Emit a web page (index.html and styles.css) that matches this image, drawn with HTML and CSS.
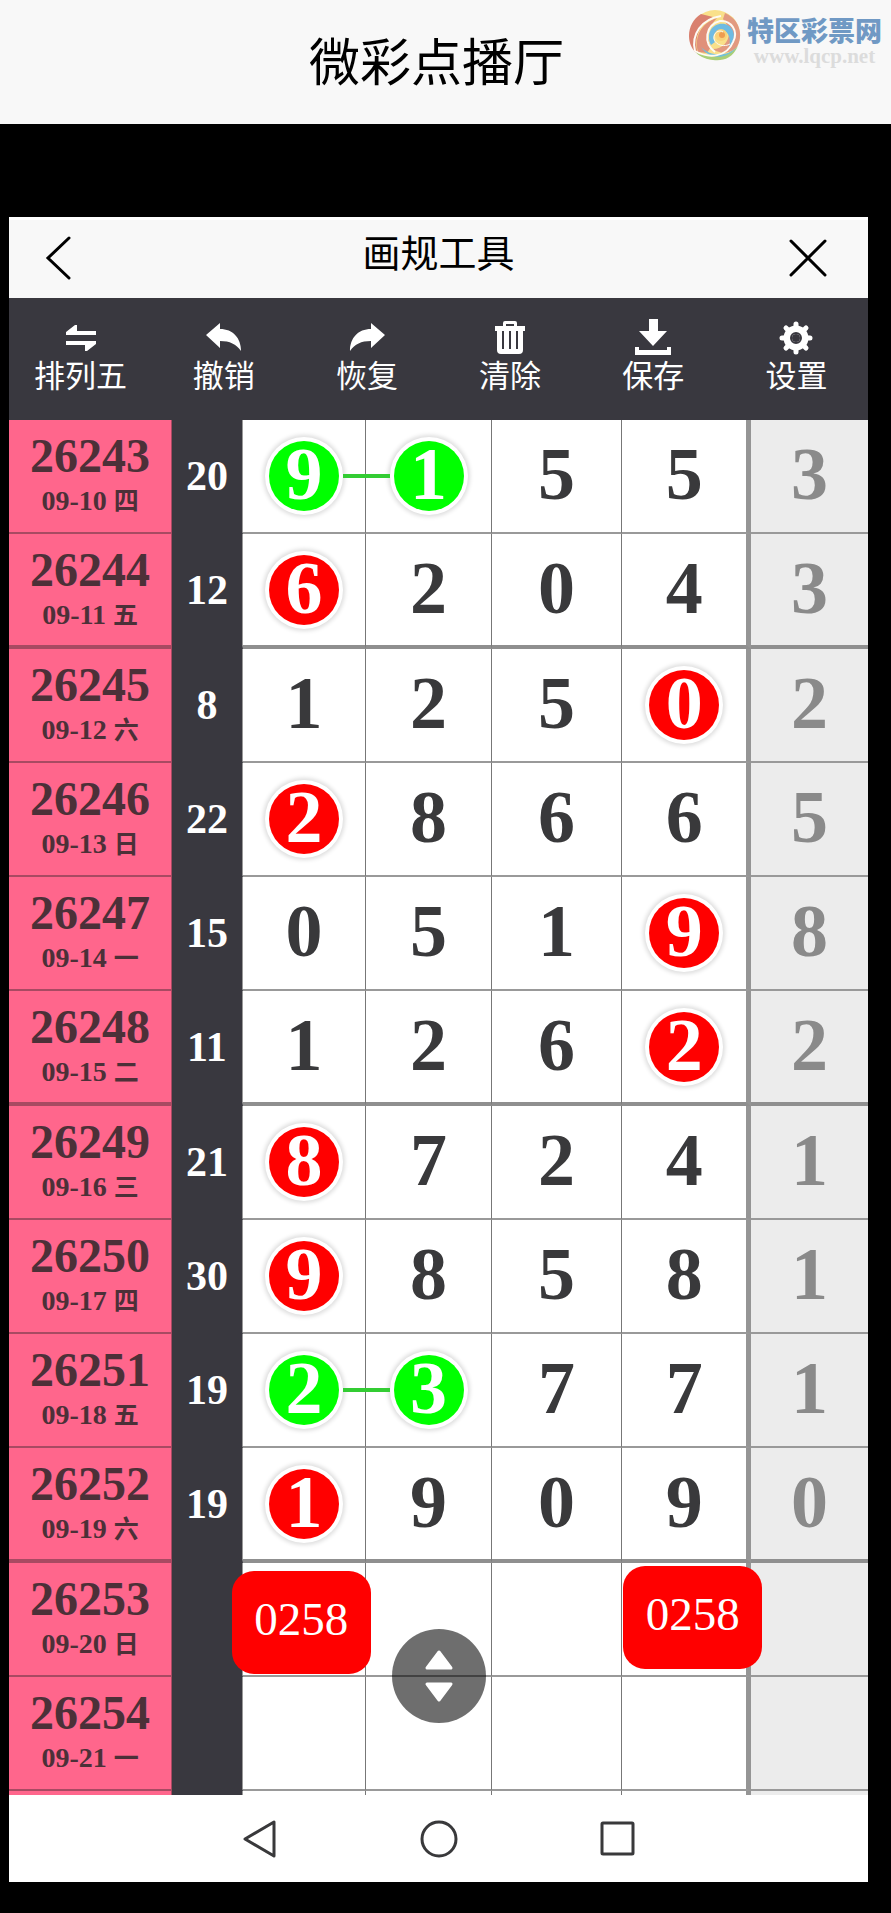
FILE: index.html
```
<!DOCTYPE html>
<html lang="zh-CN">
<head>
    <meta charset="UTF-8">
    <meta name="viewport" content="width=device-width, initial-scale=1">
    <title>微彩点播厅</title>
    <link rel="stylesheet" href="styles.css">
</head>
<body>
<header class="top">
    <h1>微彩点播厅</h1>
    <a href="#" class="logo">
        <svg class="logo_ico" viewBox="0 0 52 52" aria-hidden="true">
            <circle cx="26" cy="26" r="25" fill="#f9e08a"/>
            <path d="M12 5C-4 15-3 38 9 45C4 30 10 15 24 8Z" fill="#d9806f"/>
            <path d="M9 43C5 28 12 14 28 9C19 18 16 28 22 38L18 44Z" fill="#e0907a"/>
            <path d="M36 4C50 10 55 25 48 38C43 44 32 46 24 40C38 40 46 24 34 10Z" fill="#e29a80"/>
            <path d="M6 42C18 50 38 50 49 37C43 50 34 52 24 51C16 50 9 47 6 42Z" fill="#a9cf78"/>
            <path d="M12 38C22 48 38 48 48 38C40 49 22 53 12 38Z" fill="#72c0dc"/>
            <path d="M22 36C16 24 24 13 36 15C46 18 48 30 40 38C43 28 38 20 31 21C25 22 23 28 26 33Z" fill="#6fbbe2"/>
            <circle cx="32" cy="26" r="6" fill="#f8d27a"/>
            <circle cx="33" cy="26" r="3" fill="#ee9c50"/>
            <path d="M6 42C2 26 12 10 32 7M26 43C14 34 16 16 31 12C42 11 50 22 44 33M6 42C20 50 38 48 44 33" fill="none" stroke="#fdfaf4" stroke-width="2"/>
            <path d="M41 35C36 38 27 37 25 30C24 24 30 20 34 23" fill="none" stroke="#fdfaf4" stroke-width="1"/>
        </svg>
        <span class="logo_txt">
            <b>特区彩票网</b>
            <i>www.lqcp.net</i>
        </span>
    </a>
</header>
<main class="phone">
    <div class="bar">
        <button class="back" aria-label="返回">
            <svg viewBox="0 0 44 44"><path d="M33 2L12 22L33 42"/></svg>
        </button>
        <h2>画规工具</h2>
        <button class="close" aria-label="关闭">
            <svg viewBox="0 0 44 44"><path d="M5 5L39 39M39 5L5 39"/></svg>
        </button>
    </div>
    <div class="tools">
        <button>
            <svg viewBox="0 0 36 36"><path d="M3 16V13L12 6H14V12H33V16ZM33 22V25L24 32H22V26H3V22Z"/></svg>
            排列五
        </button>
        <button>
            <svg viewBox="0 0 36 36"><path d="M0 16L14 4V10C27 10 35 19 35 32C30 25 24 22 14 22V29Z"/></svg>
            撤销
        </button>
        <button>
            <svg viewBox="0 0 36 36"><path d="M36 16L22 4V10C9 10 1 19 1 32C6 25 12 22 22 22V29Z"/></svg>
            恢复
        </button>
        <button>
            <svg viewBox="0 0 36 36"><path fill-rule="evenodd" d="M11 7V4Q11 2 13 2H23Q25 2 25 4V7H33V12H31V31Q31 35 27 35H9Q5 35 5 31V12H3V7ZM14 5V7H22V5ZM10 12V30H12V12ZM17 12V30H19V12ZM24 12V30H26V12Z"/></svg>
            清除
        </button>
        <button>
            <svg viewBox="0 0 36 36"><path d="M14 0H23V12H32L18 27L4 12H14ZM0 28H4V31H32V28H36V36H0Z"/></svg>
            保存
        </button>
        <button>
            <svg viewBox="0 0 36 36">
                <circle cx="18" cy="19" r="9" fill="none" stroke="#fff" stroke-width="7"/>
                <circle cx="18" cy="19" r="3" fill="none" stroke="#fff" stroke-width="1"/>
                <path d="M18 5V33M4 19H32M8 9L28 29M28 9L8 29" fill="none" stroke="#fff" stroke-width="5" stroke-linecap="round"/>
                <circle cx="18" cy="19" r="5" fill="#fff" stroke="#39383f" stroke-width="2"/>
                <circle cx="18" cy="19" r="4" fill="#39383f"/>
            </svg>
            设置
        </button>
    </div>
    <div class="chart">
        <table>
            <colgroup>
                <col class="c_qi"><col class="c_sum"><col class="c_1"><col class="c_2"><col class="c_3"><col class="c_4"><col class="c_5">
            </colgroup>
            <tbody>
            <tr>
                <th scope="row">26243<small>09-10 <em>四</em></small></th>
                <td class="sum">20</td>
                <td><span class="num green link">9</span></td>
                <td><span class="num green">1</span></td>
                <td><span class="num">5</span></td>
                <td><span class="num">5</span></td>
                <td><span class="num">3</span></td>
            </tr>
            <tr class="thick">
                <th scope="row">26244<small>09-11 <em>五</em></small></th>
                <td class="sum">12</td>
                <td><span class="num red">6</span></td>
                <td><span class="num">2</span></td>
                <td><span class="num">0</span></td>
                <td><span class="num">4</span></td>
                <td><span class="num">3</span></td>
            </tr>
            <tr>
                <th scope="row">26245<small>09-12 <em>六</em></small></th>
                <td class="sum">8</td>
                <td><span class="num">1</span></td>
                <td><span class="num">2</span></td>
                <td><span class="num">5</span></td>
                <td><span class="num red">0</span></td>
                <td><span class="num">2</span></td>
            </tr>
            <tr>
                <th scope="row">26246<small>09-13 <em>日</em></small></th>
                <td class="sum">22</td>
                <td><span class="num red">2</span></td>
                <td><span class="num">8</span></td>
                <td><span class="num">6</span></td>
                <td><span class="num">6</span></td>
                <td><span class="num">5</span></td>
            </tr>
            <tr>
                <th scope="row">26247<small>09-14 <em>一</em></small></th>
                <td class="sum">15</td>
                <td><span class="num">0</span></td>
                <td><span class="num">5</span></td>
                <td><span class="num">1</span></td>
                <td><span class="num red">9</span></td>
                <td><span class="num">8</span></td>
            </tr>
            <tr class="thick">
                <th scope="row">26248<small>09-15 <em>二</em></small></th>
                <td class="sum">11</td>
                <td><span class="num">1</span></td>
                <td><span class="num">2</span></td>
                <td><span class="num">6</span></td>
                <td><span class="num red">2</span></td>
                <td><span class="num">2</span></td>
            </tr>
            <tr>
                <th scope="row">26249<small>09-16 <em>三</em></small></th>
                <td class="sum">21</td>
                <td><span class="num red">8</span></td>
                <td><span class="num">7</span></td>
                <td><span class="num">2</span></td>
                <td><span class="num">4</span></td>
                <td><span class="num">1</span></td>
            </tr>
            <tr>
                <th scope="row">26250<small>09-17 <em>四</em></small></th>
                <td class="sum">30</td>
                <td><span class="num red">9</span></td>
                <td><span class="num">8</span></td>
                <td><span class="num">5</span></td>
                <td><span class="num">8</span></td>
                <td><span class="num">1</span></td>
            </tr>
            <tr>
                <th scope="row">26251<small>09-18 <em>五</em></small></th>
                <td class="sum">19</td>
                <td><span class="num green link">2</span></td>
                <td><span class="num green">3</span></td>
                <td><span class="num">7</span></td>
                <td><span class="num">7</span></td>
                <td><span class="num">1</span></td>
            </tr>
            <tr class="thick">
                <th scope="row">26252<small>09-19 <em>六</em></small></th>
                <td class="sum">19</td>
                <td><span class="num red">1</span></td>
                <td><span class="num">9</span></td>
                <td><span class="num">0</span></td>
                <td><span class="num">9</span></td>
                <td><span class="num">0</span></td>
            </tr>
            <tr>
                <th scope="row">26253<small>09-20 <em>日</em></small></th>
                <td class="sum"></td>
                <td><span class="tag tag_a">0258</span></td>
                <td></td>
                <td></td>
                <td><span class="tag tag_b">0258</span></td>
                <td></td>
            </tr>
            <tr>
                <th scope="row">26254<small>09-21 <em>一</em></small></th>
                <td class="sum"></td>
                <td></td>
                <td></td>
                <td></td>
                <td></td>
                <td></td>
            </tr>
            <tr class="rest">
                <th></th>
                <td class="sum"></td>
                <td></td>
                <td></td>
                <td></td>
                <td></td>
                <td></td>
            </tr>
            </tbody>
        </table>
        <button class="scroll" aria-label="上下滚动">
            <svg viewBox="0 0 94 94"><path d="M47 23L59 39H35ZM47 71L59 55H35Z"/></svg>
        </button>
    </div>
    <nav class="keys">
        <button aria-label="返回键"><svg viewBox="0 0 40 40"><path d="M34 3V37L5 20Z"/></svg></button>
        <button aria-label="主页键"><svg viewBox="0 0 40 40"><circle cx="20" cy="20" r="17"/></svg></button>
        <button aria-label="多任务键"><svg viewBox="0 0 40 40"><rect x="4" y="4" width="31" height="31" rx="1"/></svg></button>
    </nav>
</main>
</body>
</html>
```
FILE: styles.css
```
*{margin: 0;padding: 0;box-sizing: border-box;}
body{background: #000;font-family: "Noto Sans CJK SC", sans-serif;color: #000;}
button{border: 0;background: none;font: inherit;color: inherit;cursor: pointer;}
svg{display: block;}

/*顶部标题*/
.top{position: relative;height: 124px;padding: 0 18px 6px 0;background: #f8f8f8;display: flex;align-items: center;justify-content: center;}
.top h1{font-size: 51px;line-height: 64px;font-weight: 400;}
.logo{position: absolute;top: 9px;right: 9px;display: flex;gap: 6px;text-decoration: none;}
.logo_ico{width: 52px;height: 52px;}
.logo_txt{padding-top: 5px;}
.logo_txt b{display: block;font-size: 27px;line-height: 32px;font-weight: 900;color: #7099c4;}
.logo_txt i{display: block;font: bold 21px/20px "Liberation Serif", serif;color: #dcdcdc;text-align: center;}

.phone{margin: 93px 23px 31px 9px;background: #fff;}
.bar{height: 81px;padding-bottom: 2px;background: #f8f8f8;border-top: 3px solid #fff;display: grid;grid-template-columns: 1fr auto 1fr;align-items: center;}
.bar h2{font-size: 38px;line-height: 44px;font-weight: 400;padding-bottom: 14px;}
.bar svg{width: 44px;height: 44px;fill: none;stroke: #000;stroke-width: 3;stroke-linecap: round;}
.back{margin-left: 27px;justify-self: start;}
.close{margin-right: 38px;justify-self: end;}

/*工具栏*/
.tools{height: 122px;padding-top: 21px;background: #39383f;color: #fff;display: grid;grid-template-columns: repeat(6, 1fr);align-items: start;}
.tools button{font-size: 31px;line-height: 38px;}
.tools svg{width: 36px;height: 36px;margin: 0 auto;fill: #fff;}

/*走势表*/
.chart{position: relative;}
.chart table{width: 100%;table-layout: fixed;border-collapse: separate;border-spacing: 0;font-family: "Liberation Serif", "Noto Sans CJK SC", serif;font-weight: bold;text-align: center;}
.c_qi{width: 19%;}
.c_sum{width: 8.2%;}
.c_1{width: 14.4%;}
.c_2{width: 14.6%;}
.c_3{width: 15.2%;}
.c_4{width: 15%;}
.c_5{width: 13.6%;}
.chart th,.chart td{position: relative;height: 114px;vertical-align: middle;border-right: 1px solid #777;border-bottom: 2px solid #999;}
.chart th{background: #ff668c;color: #4c3038;font-size: 48px;line-height: 50px;border-color: #a84a62;}
.chart small{display: block;font-size: 28px;line-height: 40px;}
.chart em{font-family: "Noto Sans CJK SC", sans-serif;font-size: 25px;line-height: 1;font-style: normal;}
.chart .sum{background: #39383f;color: #fff;font-size: 42px;border-right-color: #999;border-bottom-color: #39383f;}
.chart td:nth-child(6){border-right: 5px solid #959595;}
.chart td:last-child{background: #ececec;border-right: 0;color: #8a8a8a;}
.chart .thick th,.chart .thick td{height: 115px;border-bottom-width: 4px;}
.chart .thick td:not(.sum){border-bottom-color: #8f8f8f;}
.chart .rest th,.chart .rest td{height: 4px;border-bottom: 0;}
.num{position: relative;display: block;width: 70px;height: 70px;margin: 0 auto;font-size: 74px;line-height: 66px;border-radius: 50%;}
.chart td:not(:last-child) .num{color: #39393b;}
.chart td .num.red,.chart td .num.green{color: #fff;box-shadow: 0 0 0 4px #fff, 0 0 4px 6px #ddd;}
.red{background: #f00;}
.green{background: #0f0;}
.link{z-index: 1;}
.link:after{content: "";position: absolute;left: 74px;top: 33px;width: 47px;height: 4px;background: #3c3;}
.tag{position: absolute;z-index: 2;width: 139px;height: 103px;border-radius: 22px;background: #f00;color: #fff;font-size: 47px;line-height: 96px;font-weight: 400;}
.tag_a{left: -11px;top: 8px;}
.tag_b{left: 1px;top: 3px;}
.scroll{position: absolute;z-index: 3;left: 50%;bottom: 72px;width: 94px;height: 94px;margin-left: -47px;border-radius: 50%;background: rgba(0,0,0,.57);}
.scroll svg{fill: #fff;stroke: #fff;stroke-width: 3;stroke-linejoin: round;}

.keys{height: 87px;display: flex;justify-content: center;align-items: center;gap: 139px;}
.keys svg{width: 40px;height: 40px;fill: none;stroke: #39393b;stroke-width: 3;stroke-linejoin: round;}
```
